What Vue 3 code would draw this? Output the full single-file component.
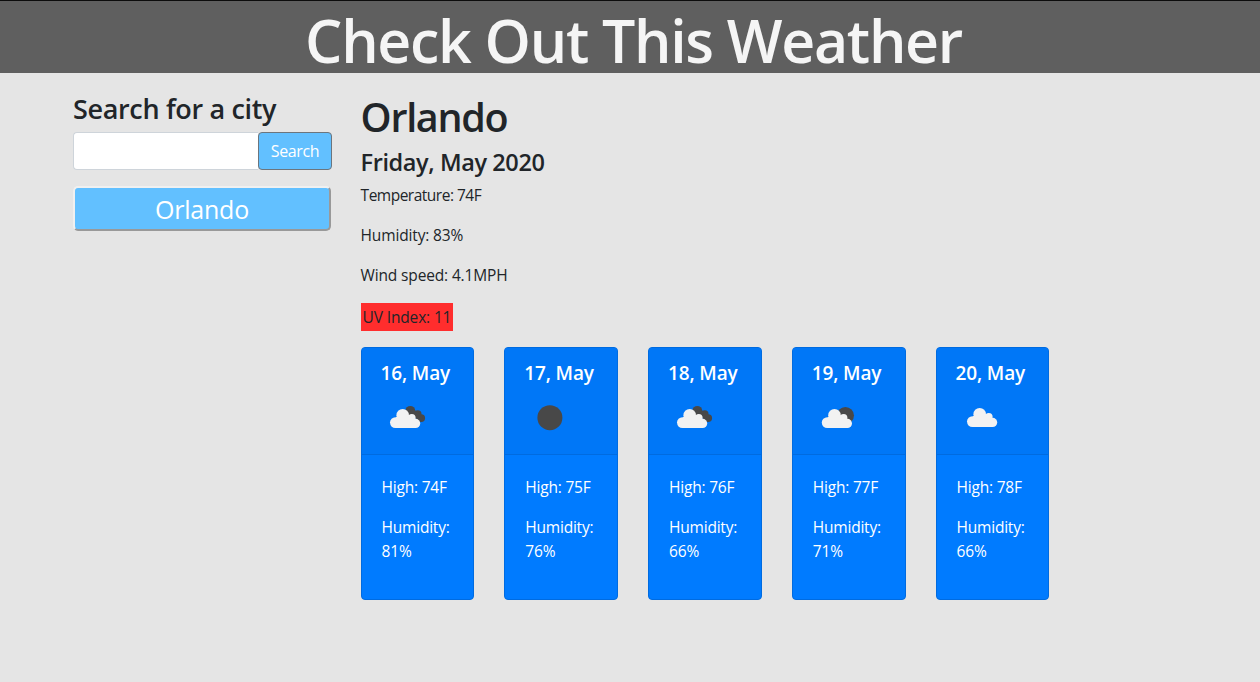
<script setup>
import { ref } from 'vue'

const query = ref('')
const readings = ['Temperature: 74F', 'Humidity: 83%', 'Wind speed: 4.1MPH']
const forecast = [
  { date: '16, May', icon: 'broken', high: 74, humidity: 81 },
  { date: '17, May', icon: 'clear', high: 75, humidity: 76 },
  { date: '18, May', icon: 'broken', high: 76, humidity: 66 },
  { date: '19, May', icon: 'few', high: 77, humidity: 71 },
  { date: '20, May', icon: 'cloud', high: 78, humidity: 66 },
]
const cloudOffset = { broken: 'translate(8 16)', few: 'translate(8.8 16)', cloud: 'translate(10 15)' }
</script>

<template>
  <div class="page">
    <header class="banner"><h1>Check Out This Weather</h1></header>
    <main class="content">
      <aside class="sidebar">
        <h3>Search for a city</h3>
        <form class="search" @submit.prevent>
          <input v-model="query" type="text" aria-label="City" />
          <button type="submit"><span>Search</span></button>
        </form>
        <button class="city"><span>Orlando</span></button>
      </aside>
      <section class="weather">
        <h2>Orlando</h2>
        <h4>Friday, May 2020</h4>
        <p v-for="(line, i) in readings" :key="line" :class="'r' + i"><span>{{ line }}</span></p>
        <div class="uv"><span>UV Index: 11</span></div>
        <div class="cards">
          <article v-for="day in forecast" :key="day.date" class="card">
            <div class="card-head">
              <h5>{{ day.date }}</h5>
              <svg width="50" height="50" viewBox="0 0 50 50">
                <circle v-if="day.icon === 'clear'" cx="24.9" cy="24.7" r="12.5" fill="#484848" />
                <circle v-if="day.icon === 'few'" cx="32.4" cy="22.5" r="8.6" fill="#484848" />
                <g v-if="day.icon === 'broken'" transform="translate(8 16)" fill="#484848">
                  <circle cx="20.3" cy="1.8" r="4.9" />
                  <circle cx="27.8" cy="4.9" r="3.7" />
                  <circle cx="31.2" cy="9.1" r="3.9" />
                  <path d="M17 4L23 0L29 4L33 8L30.5 12.8L25 9Z" />
                </g>
                <g v-if="cloudOffset[day.icon]" :transform="cloudOffset[day.icon]" fill="#f2f2f2">
                  <circle cx="5.4" cy="13.6" r="5.4" />
                  <circle cx="12.7" cy="6.3" r="6.3" />
                  <circle cx="21.8" cy="8.8" r="3.8" />
                  <circle cx="25.6" cy="14.4" r="4.6" />
                  <path d="M5.5 19L6 8L18 6L25 9L26 19Z" />
                </g>
              </svg>
            </div>
            <div class="card-body">
              <p class="high">High: {{ day.high }}F</p>
              <p class="hum">Humidity: {{ day.humidity }}%</p>
            </div>
          </article>
        </div>
      </section>
    </main>
  </div>
</template>

<style>
body { margin: 0; background: #e5e5e5; }
</style>

<style scoped>
* { box-sizing: border-box; }
.page {
  height: 682px;
  overflow: hidden;
  background: #e5e5e5;
  color: #212529;
  font: 400 16px/24px "Open Sans", "Noto Sans", sans-serif;
  letter-spacing: -0.3px;
}
h1, h2, h3, h4, h5, p { margin: 0; font-weight: 600; white-space: nowrap; }
p { font-weight: 400; }
.banner {
  height: 73px;
  border-top: 1px solid #0c0c0c;
  background: #5f5f5f;
  color: #f5f5f5;
  padding: 4px 0 0 7px;
  text-align: center;
}
h1 { font-size: 59px; line-height: 70px; letter-spacing: -1.3px; }
.content { display: flex; padding: 22px 0 0 73px; }
.sidebar { width: 259px; margin-right: 28.6px; }
h3 { font-size: 27px; line-height: 28px; letter-spacing: -0.34px; }
.search { display: flex; margin-top: 9px; height: 38px; }
input {
  flex: 1;
  min-width: 0;
  border: 1px solid #ced4da;
  border-right: 0;
  border-radius: 4px 0 0 4px;
  background: #fff;
  outline: none;
}
.search button {
  width: 74px;
  padding: 0;
  border: 1px solid #6c757d;
  border-radius: 4px;
  background: #62c0ff;
  color: #fff;
  font: inherit;
  letter-spacing: -0.4px;
}
.city {
  display: block;
  width: 258px;
  height: 45px;
  margin-top: 16px;
  padding: 0;
  border: 2px solid;
  border-color: #f0f0f0 #999 #999 #f0f0f0;
  border-radius: 5px;
  background: #62c0ff;
  color: #fff;
  font: 400 25px/40px "Open Sans", sans-serif;
  letter-spacing: -0.2px;
}
.weather { width: 689px; }
h2 { font-size: 39.5px; line-height: 48px; margin-top: -2px; letter-spacing: -1.3px; }
h4 { font-size: 23.5px; line-height: 29px; margin-top: 7px; letter-spacing: -0.4px; }
.weather > p { margin: 6px 0 16px; font-size: 15.5px; letter-spacing: -0.15px; }
.weather > p + p { margin-top: 0; }
.weather > .r0 { letter-spacing: -0.5px; }
.uv {
  width: 92px;
  height: 28px;
  padding: 2px;
  background: #ff2d2d;
  font-size: 15.5px;
  letter-spacing: -0.15px;
  white-space: nowrap;
}
.cards { display: grid; grid-template-columns: repeat(5, 113.75px); gap: 30px; margin-top: 16px; }
.card {
  height: 253px;
  border: 1px solid #006be0;
  border-radius: 4px;
  background: #007bff;
  color: #fff;
  overflow: hidden;
}
.card-head { height: 107px; padding: 13px 0 0 20px; background: #0077f7; border-bottom: 1px solid #006be0; }
h5 { font-size: 19px; line-height: 24px; margin-left: -1px; letter-spacing: -0.15px; }
svg { display: block; margin-top: 8px; }
.card-body { padding: 20px; font-size: 15.5px; letter-spacing: -0.22px; }
.card-body p + p { margin-top: 16px; }
.card-body .hum { white-space: normal; }
</style>
